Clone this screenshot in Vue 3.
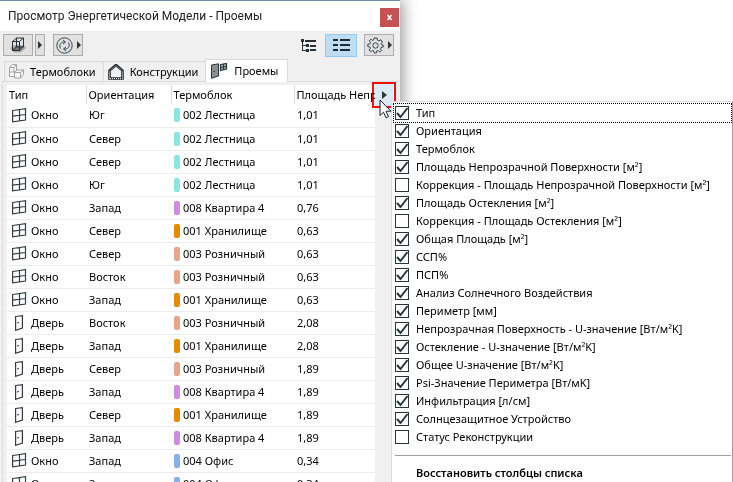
<script setup>
import { ref } from 'vue'

const swatches = {
  '002 Лестница': '#8be6e3',
  '008 Квартира 4': '#d28ae6',
  '001 Хранилище': '#e68a00',
  '003 Розничный': '#e6a58c',
  '004 Офис': '#8aaee6'
}

const rows = [
  ['Окно', 'Юг', '002 Лестница', '1,01'],
  ['Окно', 'Север', '002 Лестница', '1,01'],
  ['Окно', 'Север', '002 Лестница', '1,01'],
  ['Окно', 'Юг', '002 Лестница', '1,01'],
  ['Окно', 'Запад', '008 Квартира 4', '0,76'],
  ['Окно', 'Север', '001 Хранилище', '0,63'],
  ['Окно', 'Север', '003 Розничный', '0,63'],
  ['Окно', 'Восток', '003 Розничный', '0,63'],
  ['Окно', 'Запад', '001 Хранилище', '0,63'],
  ['Дверь', 'Восток', '003 Розничный', '2,08'],
  ['Дверь', 'Запад', '001 Хранилище', '2,08'],
  ['Дверь', 'Север', '003 Розничный', '1,89'],
  ['Дверь', 'Запад', '008 Квартира 4', '1,89'],
  ['Дверь', 'Север', '001 Хранилище', '1,89'],
  ['Дверь', 'Запад', '008 Квартира 4', '1,89'],
  ['Окно', 'Запад', '004 Офис', '0,34'],
  ['Окно', 'Запад', '004 Офис', '0,34']
]

const columns = ref([
  { label: 'Тип', on: true },
  { label: 'Ориентация', on: true },
  { label: 'Термоблок', on: true },
  { label: 'Площадь Непрозрачной Поверхности [м²]', on: true },
  { label: 'Коррекция - Площадь Непрозрачной Поверхности [м²]', on: false },
  { label: 'Площадь Остекления [м²]', on: true },
  { label: 'Коррекция - Площадь Остекления [м²]', on: false },
  { label: 'Общая Площадь [м²]', on: true },
  { label: 'ССП%', on: true },
  { label: 'ПСП%', on: true },
  { label: 'Анализ Солнечного Воздействия', on: true },
  { label: 'Периметр [мм]', on: true },
  { label: 'Непрозрачная Поверхность - U-значение [Вт/м²K]', on: true },
  { label: 'Остекление - U-значение [Вт/м²K]', on: true },
  { label: 'Общее U-значение [Вт/м²K]', on: true },
  { label: 'Psi-Значение Периметра [Вт/мK]', on: true },
  { label: 'Инфильтрация [л/см]', on: true },
  { label: 'Солнцезащитное Устройство', on: true },
  { label: 'Статус Реконструкции', on: false }
])

function restore() {
  columns.value.forEach((c) => { c.on = true })
}
</script>

<template>
  <main class="screen">
    <section class="window">
      <header class="titlebar">
        <h1>Просмотр Энергетической Модели - Проемы</h1>
        <button class="close" type="button" aria-label="Закрыть">
          <svg width="7" height="7" viewBox="0 0 7 7"><path d="M1.500 1L5.500 6M5.500 1L1.500 6" stroke="#fff" stroke-width="1.600" /></svg>
        </button>
      </header>

      <div class="toolbar">
        <div class="group">
          <button class="tool" type="button" aria-label="Показать модель">
            <svg width="18" height="18" viewBox="0 0 18 18" fill="none">
              <path d="M1 12L5 9H15L17 12L12 16.500H5Z" fill="#a9adaf" />
              <path d="M3 14L7 10H14L11 14.500Z" fill="#74797c" />
              <path d="M3.500 5.500H10.500V14.500H3.500ZM7.500 2H14.500V11H7.500ZM3.500 5.500L7.500 2M10.500 5.500L14.500 2M10.500 14.500L14.500 11M3.500 14.500L7.500 11" stroke="#263238" />
            </svg>
          </button>
          <button class="tool narrow" type="button" aria-label="Параметры показа">
            <svg width="4" height="8" viewBox="0 0 4 8"><path d="M0 0L4 4L0 8Z" fill="#333" /></svg>
          </button>
        </div>
        <button class="tool" type="button" aria-label="Обновить">
          <svg width="17" height="17" viewBox="0 0 17 17" fill="none" stroke="#37444a">
            <circle cx="8.500" cy="8.500" r="7.700" />
            <path d="M4.500 11.500C2.500 7.500 5 4.500 9 5M7 3L9.500 5L7 7M12.500 5.500C14.500 9.500 12 12.500 8 12M10 10L7.500 12L10 14" />
          </svg>
          <svg width="4" height="8" viewBox="0 0 4 8"><path d="M0 0L4 4L0 8Z" fill="#333" /></svg>
        </button>
        <div class="views">
          <button class="view tree" type="button" aria-label="Дерево">
            <svg width="16" height="13" viewBox="0 0 16 13" fill="#263238">
              <path d="M0 0H3V3H0ZM4 1H15V3H4ZM5 5H8V8H5ZM9 6H15V8H9ZM5 10H8V13H5ZM9 10H15V12H9ZM1 3H2V12H1ZM2 6H5V7H2ZM2 11H5V12H2Z" />
            </svg>
          </button>
          <button class="view selected" type="button" aria-label="Список">
            <svg width="17" height="12" viewBox="0 0 17 12" fill="#1d2a33">
              <path d="M0 0H5V2H0ZM7 0H17V2H7ZM0 5H5V7H0ZM7 5H17V7H7ZM0 10H5V12H0ZM7 10H17V12H7Z" />
            </svg>
          </button>
          <button class="tool" type="button" aria-label="Настройки">
            <svg width="17" height="17" viewBox="0 0 17 17" fill="none" stroke="#37444a">
              <path d="M7 1H10L10.500 3.200L12 3.900L14 2.700L15.500 5L14 6.600L14.200 7.500L16.200 8V10L14 10.500L13.500 11.800L14.600 13.600L12.800 15L11.200 13.600L9.800 14L9.300 16H7.200L6.800 14L5.500 13.500L3.700 14.700L2.100 13L3.400 11.300L2.900 10L0.800 9.500V7.200L3 6.800L3.500 5.500L2.300 3.700L4 2.200L5.500 3.500L6.700 3Z" />
              <circle cx="8.500" cy="8.500" r="2.700" />
            </svg>
            <svg width="4" height="8" viewBox="0 0 4 8"><path d="M0 0L4 4L0 8Z" fill="#333" /></svg>
          </button>
        </div>
      </div>

      <nav class="tabs">
        <button class="tab" type="button">
          <svg width="15" height="15" viewBox="0 0 15 15" fill="#f7f7f7" stroke="#a0a3a5">
            <path d="M.5 3.500L3.500.5H7.500V7L5.500 8.500V12.500H.5ZM.5 3.500H5V8M5 3.500L7.500.5M.5 8H5.500" />
            <path d="M5.500 8.500L8 6H14.500V10.500L11.500 14H5.500ZM5.500 8.500H11.500V14M11.500 8.500L14.500 6" />
          </svg>
          <span>Термоблоки</span>
        </button>
        <button class="tab" type="button">
          <svg width="16" height="16" viewBox="0 0 16 16" fill="none" stroke="#1d292f">
            <path d="M1.500 14.500V6.500L8 1L14.500 6.500V14.500Z" stroke-width="2.600" />
            <path d="M1.500 14.500V7M14.500 14.500V7M2 14.500H14" stroke="#fff" stroke-dasharray="1 1" />
            <path d="M2 6.500L8 1.500L14 6.500" stroke="#aaa" stroke-width=".6" />
          </svg>
          <span>Конструкции</span>
        </button>
        <button class="tab active" type="button">
          <svg width="17" height="16" viewBox="0 0 17 16" fill="none" stroke="#2a363c">
            <path d="M.5 2L7.500.8V13L.5 15.300Z" fill="#8a8f91" />
            <path d="M2.500 8.500H4" />
            <path d="M9.500 1.500L15.500.5V6L9.500 7.500Z" fill="#aaa" stroke-width="1.200" />
            <path d="M12.500 1V7M9.500 4.500L15.500 3.500" />
          </svg>
          <span>Проемы</span>
        </button>
      </nav>

      <div class="panel">
        <table class="list">
          <colgroup><col class="c1"><col class="c2"><col class="c3"><col></colgroup>
          <thead>
            <tr><th>Тип</th><th>Ориентация</th><th>Термоблок</th><th>Площадь Непрозрачной</th></tr>
          </thead>
          <tbody>
            <tr v-for="(row, i) in rows" :key="i">
              <td>
                <div class="cell kind">
                  <svg v-if="row[0] === 'Окно'" width="15" height="15" viewBox="0 0 15 15" fill="none" stroke="#333d42">
                    <path d="M.6 2.500L13.500.7V12L.6 13.800ZM7.500 1.500V13M.6 8.200L13.500 6.500" stroke-width="1.200" />
                  </svg>
                  <svg v-else class="door" width="8" height="16" viewBox="0 0 8 16" fill="none" stroke="#333d42">
                    <path d="M.6 1.500L7.400.7V13L.6 15.300Z" stroke-width="1.200" /><path d="M2 8L4 7.500" />
                  </svg>
                  <span>{{ row[0] }}</span>
                </div>
              </td>
              <td>{{ row[1] }}</td>
              <td>
                <div class="cell block">
                  <i class="swatch" :style="{ background: swatches[row[2]] }"></i>
                  <span>{{ row[2] }}</span>
                </div>
              </td>
              <td>{{ row[3] }}</td>
            </tr>
          </tbody>
        </table>
        <div class="side">
          <button class="more" type="button" aria-label="Столбцы">
            <svg width="5" height="8" viewBox="0 0 5 8"><path d="M0 0L5 4L0 8Z" fill="#333" /></svg>
          </button>
        </div>
      </div>
    </section>

    <form class="menu">
      <label v-for="(c, i) in columns" :key="c.label" class="option" :class="{ focused: i === 0 }">
        <span class="box">
          <input v-model="c.on" type="checkbox">
          <svg v-if="c.on" width="14" height="14" viewBox="0 0 14 14"><path d="M2 7L5.500 11L12.500 2" fill="none" stroke="#29353b" stroke-width="2" /></svg>
        </span>
        <span>{{ c.label }}</span>
      </label>
      <hr>
      <button class="restore" type="button" @click="restore">Восстановить столбцы списка</button>
    </form>

    <svg class="pointer" width="13" height="20" viewBox="0 0 13 20"><path d="M1 1V16.500L4.500 13.200L7 18.800L9.500 17.700L7 12.200H12Z" fill="#fff" stroke="#1a1f2b" /></svg>
  </main>
</template>

<style>
body {
  background: #fff;
}
</style>

<style scoped>
.screen {
  position: relative;
  height: 100vh;
  overflow: hidden;
  font: 11px/18px "Noto Sans", "Open Sans", sans-serif;
  color: #000;
}

button {
  font: inherit;
  color: inherit;
  margin: 0;
  padding: 0;
  border: 0;
  background: none;
}

svg {
  display: block;
  flex: none;
}

.window {
  display: flex;
  flex-direction: column;
  box-sizing: border-box;
  width: 400px;
  height: 100vh;
  border-top: 1px solid #6d8bab;
  background: #f0f0f0;
  box-shadow: 3px 0 14px rgba(0, 0, 0, 0.4);
}

.titlebar {
  display: flex;
  align-items: center;
  justify-content: space-between;
  height: 30px;
  padding: 0 1px 0 8px;
  background: #fff;
}

h1 {
  margin: 0;
  font: 12px/18px Roboto, "Open Sans", sans-serif;
  color: #222;
}

.close {
  display: grid;
  place-items: center;
  align-self: flex-end;
  width: 19px;
  height: 19px;
  margin-bottom: 4px;
  background: #c75050;
}

.toolbar {
  display: flex;
  align-items: center;
  gap: 8px;
  height: 28px;
  padding: 0 6px 0 3px;
}

.group {
  display: flex;
  gap: 2px;
}

.tool {
  display: flex;
  align-items: center;
  justify-content: center;
  gap: 4px;
  box-sizing: border-box;
  width: 30px;
  height: 22px;
  border: 1px solid #adadad;
  background: #e1e1e1;
}

.narrow {
  width: 10px;
}

.views {
  display: flex;
  align-items: center;
  gap: 7px;
  margin-left: auto;
}

.view {
  display: grid;
  place-items: center;
  box-sizing: border-box;
  width: 32px;
  height: 23px;
}

.tree {
  width: 18px;
}

.selected {
  border: 1px solid #99c9ef;
  background: #c0dcf3;
}

.tabs {
  display: flex;
  align-items: flex-end;
  height: 22px;
  padding-left: 4px;
}

.tab {
  display: flex;
  align-items: center;
  gap: 6px;
  box-sizing: border-box;
  height: 20px;
  padding: 0 7px 0 4px;
  border: 1px solid #d9d9d9;
  border-width: 1px 0 0 1px;
}

.active {
  position: relative;
  z-index: 1;
  height: 23px;
  margin-bottom: -1px;
  padding: 0 9px 0 5px;
  border-right-width: 1px;
  background: #fff;
}

.panel {
  display: flex;
  flex: 1;
  min-height: 0;
  margin-left: 2px;
  padding: 3px 0 0 4px;
  border: 1px solid #dcdcdc;
  border-width: 1px 0 0 1px;
}

.list {
  flex: 1;
  align-self: flex-start;
  width: 0;
  border-collapse: collapse;
  table-layout: fixed;
  background: #fff;
}

.c1 {
  width: 79px;
}

.c2 {
  width: 85px;
}

.c3 {
  width: 123px;
}

th,
td {
  box-sizing: border-box;
  height: 23px;
  padding: 0 0 0 2px;
  overflow: hidden;
  font-weight: 400;
  text-align: left;
  white-space: nowrap;
}

th {
  height: 19px;
}

th + th {
  border-left: 1px solid #dcdcdc;
}

td {
  border-bottom: 1px solid #ededed;
}

td + td {
  padding-left: 3px;
}

.cell {
  display: flex;
  align-items: center;
}

.kind {
  gap: 4px;
  padding-left: 3px;
}

.door {
  margin: 0 4px 0 3px;
}

.block {
  gap: 3px;
}

.swatch {
  width: 6px;
  height: 14px;
  border-radius: 2px;
}

.side {
  width: 25px;
}

.more {
  position: relative;
  display: grid;
  place-items: center;
  width: 18px;
  height: 22px;
  margin-top: -1px;
  background: #d9ebf9;
}

.more::after {
  position: absolute;
  inset: -2px -3px -2px -3px;
  border: 2px solid #ff1010;
  mix-blend-mode: multiply;
  content: "";
}

.menu {
  position: absolute;
  top: 101px;
  left: 391px;
  right: 0;
  box-sizing: border-box;
  padding: 2px 1px 0 2px;
  border: 1px solid #dcdcdc;
  border-right-color: #a0a0a0;
  border-bottom-color: #a0a0a0;
  background: #fff;
}

.option {
  display: flex;
  align-items: center;
  gap: 7px;
  height: 18px;
  padding-left: 1px;
  white-space: nowrap;
}

.focused {
  outline: 1px dotted #000;
}

.box {
  display: grid;
}

.box > * {
  grid-area: 1 / 1;
}

.box svg {
  pointer-events: none;
}

input {
  appearance: none;
  box-sizing: border-box;
  width: 14px;
  height: 14px;
  margin: 0;
  border: 1px solid #29353b;
  background: #fff;
}

hr {
  margin: 9px 0 8px 1px;
  border: 0;
  border-top: 1px solid #a0a0a0;
}

.restore {
  display: block;
  padding-left: 22px;
  font-weight: 600;
}

.pointer {
  position: absolute;
  top: 99px;
  left: 379px;
}
</style>
